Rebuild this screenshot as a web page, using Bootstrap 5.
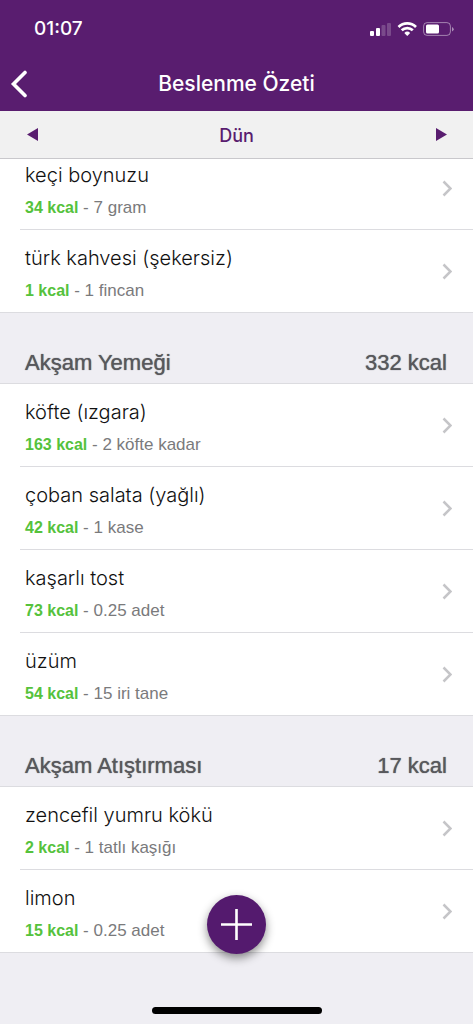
<!DOCTYPE html>
<html lang="tr">
<head>
<meta charset="utf-8">
<meta name="viewport" content="width=device-width, initial-scale=1">
<title>Beslenme Özeti</title>
<link href="https://cdn.jsdelivr.net/npm/bootstrap@5.3.0/dist/css/bootstrap.min.css" rel="stylesheet">
<style>
  :root { --plum: #591d6f; --line: #dcdce0; --page: #efeef3; }
  body { background: var(--page); font-family: "Liberation Sans", Arial, sans-serif; min-height: 100vh; }
  svg { display: block; }
  .top-area { background: var(--plum); color: #fff; }
  .status-row { height: 58px; padding: 0 19px 0 34px; font: 500 19px/58px Inter, sans-serif; }
  .title-row { height: 53px; padding-bottom: 2px; }
  .title-row h1 { font: 500 21px/24px Inter, sans-serif; }
  .title-row .side { width: 48px; height: 50px; }
  .day-row { height: 48px; padding: 0 16px; background: #f1f1f1; border-bottom: 1px solid #c9c8cc; color: var(--plum); }
  .day-row .day-name { font: 500 18px/24px Inter, sans-serif; padding-top: 2px; }
  .day-row button { width: 32px; height: 40px; }
  .plain-btn { border: 0; background: none; padding: 0; color: inherit; display: flex; align-items: center; justify-content: center; }
  /* the list is scrolled slightly under the top bars */
  .scrolled { margin-top: -12px; }
  .meal-head { height: 71px; padding: 0 26px 6px 25px; border-bottom: 1px solid var(--line); color: #58585c; }
  .meal-head h2, .meal-head span { font-size: 22px; line-height: 28px; font-weight: 400; margin: 0; text-shadow: 0 0 1px currentColor; }
  .food { height: 83px; margin-left: 20px; padding: 0 21px 0 5px; background: #fff; border-bottom: 1px solid var(--line); color: #111; text-decoration: none; }
  .foods { background: #fff; }
  .foods li:last-child .food { margin-left: 0; padding-left: 25px; }
  .food-name { font: 300 20px/24px Inter, sans-serif; padding-top: 5px; }
  .food-info { font-size: 17px; line-height: 20px; margin-top: 11px; color: #7a7a7c; }
  .food-info b { color: #55c23c; font-size: 16px; font-weight: 700; }
  .add-btn { width: 59px; height: 59px; bottom: 70px; left: 50%; margin-left: -30px; background: #541a6e; color: #fff; border-radius: 50%; box-shadow: 0 4px 10px rgba(0,0,0,.45); }
  .home-bar { width: 170px; height: 7px; bottom: 10px; left: 50%; margin-left: -85px; background: #000; border-radius: 4px; }
</style>
</head>
<body>
<svg class="d-none" aria-hidden="true">
  <symbol id="chev" viewBox="0 0 10 17"><path d="M1.500 1.500 8.500 8.500 1.500 15.500" fill="none" stroke="#c5c5c8" stroke-width="2.500"/></symbol>
</svg>

<header class="sticky-top">
  <div class="top-area">
    <div class="status-row d-flex align-items-center justify-content-between">
      <span>01:07</span>
      <div class="d-flex align-items-center">
        <svg width="86" height="16" viewBox="0 0 86 16" fill="#fff" aria-hidden="true">
          <rect x="2" y="10" width="4" height="5" rx="1"/>
          <rect x="8" y="7" width="4" height="8" rx="1"/>
          <rect x="13.500" y="4" width="4" height="11" rx="1" opacity=".2"/>
          <rect x="19" y="2" width="4" height="13" rx="1" opacity=".2"/>
          <g fill="none" stroke="#fff" stroke-width="2.700">
            <path d="M30.500 6a12.500 12.500 0 0 1 17.500 0"/>
            <path d="M33.700 9.300a8 8 0 0 1 11.100 0"/>
          </g>
          <path d="M36.300 11.900a4.200 4.200 0 0 1 5.900 0L39.250 15z"/>
          <rect x="55.600" y="1.600" width="26.800" height="12.800" rx="3.500" fill="none" stroke="#fff" stroke-opacity=".45"/>
          <rect x="58" y="3.500" width="13" height="9" rx="1.500"/>
          <path d="M84 6v4.500q1.700-.7 1.700-2.250T84 6z" opacity=".5"/>
        </svg>
      </div>
    </div>
    <div class="title-row d-flex align-items-center justify-content-between">
      <button class="plain-btn side justify-content-start ps-2" type="button" aria-label="Geri">
        <svg width="22" height="28" viewBox="0 0 22 28"><path d="M17 2.500 5.500 14 17 25.500" fill="none" stroke="#fff" stroke-width="3.600" stroke-linecap="round" stroke-linejoin="miter"/></svg>
      </button>
      <h1 class="m-0">Beslenme Özeti</h1>
      <div class="side"></div>
    </div>
  </div>
  <div class="day-row d-flex align-items-center justify-content-between">
    <button class="plain-btn" type="button" aria-label="Önceki gün"><svg width="11" height="13" viewBox="0 0 11 13"><path d="M11 0v13L0 6.500z" fill="currentColor"/></svg></button>
    <span class="day-name">Dün</span>
    <button class="plain-btn" type="button" aria-label="Sonraki gün"><svg width="11" height="13" viewBox="0 0 11 13"><path d="M0 0v13l11-6.500z" fill="currentColor"/></svg></button>
  </div>
</header>

<main class="scrolled">
  <ul class="foods list-unstyled m-0">
    <li><a href="#" class="food d-flex align-items-center justify-content-between"><div><div class="food-name">keçi boynuzu</div><div class="food-info"><b>34 kcal</b> - 7 gram</div></div><svg width="10" height="17"><use href="#chev"/></svg></a></li>
    <li><a href="#" class="food d-flex align-items-center justify-content-between"><div><div class="food-name">türk kahvesi (şekersiz)</div><div class="food-info"><b>1 kcal</b> - 1 fincan</div></div><svg width="10" height="17"><use href="#chev"/></svg></a></li>
  </ul>

  <div class="meal-head d-flex align-items-end justify-content-between"><h2>Akşam Yemeği</h2><span>332 kcal</span></div>
  <ul class="foods list-unstyled m-0">
    <li><a href="#" class="food d-flex align-items-center justify-content-between"><div><div class="food-name">köfte (ızgara)</div><div class="food-info"><b>163 kcal</b> - 2 köfte kadar</div></div><svg width="10" height="17"><use href="#chev"/></svg></a></li>
    <li><a href="#" class="food d-flex align-items-center justify-content-between"><div><div class="food-name">çoban salata (yağlı)</div><div class="food-info"><b>42 kcal</b> - 1 kase</div></div><svg width="10" height="17"><use href="#chev"/></svg></a></li>
    <li><a href="#" class="food d-flex align-items-center justify-content-between"><div><div class="food-name">kaşarlı tost</div><div class="food-info"><b>73 kcal</b> - 0.25 adet</div></div><svg width="10" height="17"><use href="#chev"/></svg></a></li>
    <li><a href="#" class="food d-flex align-items-center justify-content-between"><div><div class="food-name">üzüm</div><div class="food-info"><b>54 kcal</b> - 15 iri tane</div></div><svg width="10" height="17"><use href="#chev"/></svg></a></li>
  </ul>

  <div class="meal-head d-flex align-items-end justify-content-between"><h2>Akşam Atıştırması</h2><span>17 kcal</span></div>
  <ul class="foods list-unstyled m-0">
    <li><a href="#" class="food d-flex align-items-center justify-content-between"><div><div class="food-name">zencefil yumru kökü</div><div class="food-info"><b>2 kcal</b> - 1 tatlı kaşığı</div></div><svg width="10" height="17"><use href="#chev"/></svg></a></li>
    <li><a href="#" class="food d-flex align-items-center justify-content-between"><div><div class="food-name">limon</div><div class="food-info"><b>15 kcal</b> - 0.25 adet</div></div><svg width="10" height="17"><use href="#chev"/></svg></a></li>
  </ul>
</main>

<button class="plain-btn add-btn position-fixed" type="button" aria-label="Ekle">
  <svg width="31" height="31" viewBox="0 0 31 31"><path d="M15.500 0v31M0 15.500h31" stroke="#fff" stroke-width="2.600"/></svg>
</button>
<div class="home-bar position-fixed"></div>
<script src="https://cdn.jsdelivr.net/npm/bootstrap@5.3.0/dist/js/bootstrap.bundle.min.js"></script>
</body>
</html>
